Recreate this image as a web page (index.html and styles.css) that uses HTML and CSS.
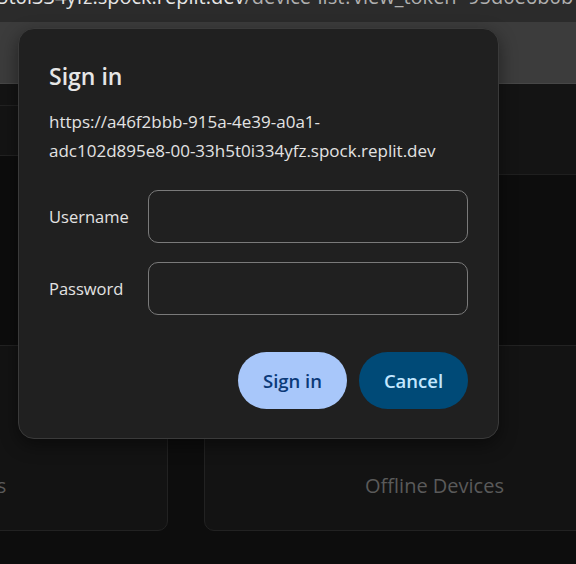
FILE: index.html
```html
<!DOCTYPE html>
<html lang="en">
<head>
<meta charset="utf-8">
<title>Sign in</title>
<link rel="stylesheet" href="styles.css">
</head>
<body>
  <div class="urlbar"><span class="url"><span class="host">5t0i334yfz.spock.replit.dev</span><span class="path">/device-list?view_token=95d0e6b0b-3</span></span></div>
  <div class="toolbar"></div>
  <div class="header">
    <div class="header-left"><div class="header-row"></div></div>
    <div class="header-right"></div>
  </div>
  <div class="cards">
    <div class="card"><span class="card-label">Online Devices</span></div>
    <div class="card"><span class="card-label">Offline Devices</span></div>
  </div>

  <div class="dialog" role="dialog" aria-labelledby="dlg-title">
    <h1 class="dialog-title" id="dlg-title">Sign in</h1>
    <p class="dialog-origin">https://a46f2bbb-915a-4e39-a0a1-<br>adc102d895e8-00-33h5t0i334yfz.spock.replit.dev</p>
    <form class="dialog-form">
      <label class="field-label" for="user">Username</label>
      <input class="field-input" id="user" type="text">
      <label class="field-label" for="pass">Password</label>
      <input class="field-input" id="pass" type="password">
    </form>
    <div class="dialog-actions">
      <button class="btn btn-primary" type="button">Sign in</button>
      <button class="btn btn-secondary" type="button">Cancel</button>
    </div>
  </div>
</body>
</html>
```
FILE: styles.css
```css
* { box-sizing: border-box; }

html, body {
  margin: 0;
  padding: 0;
}

body {
  width: 576px;
  height: 564px;
  overflow: hidden;
  background: #0d0d0d;
  font-family: "Open Sans", "Noto Sans", sans-serif;
  position: relative;
}

.urlbar {
  height: 22px;
  background: #2b2b2b;
  overflow: hidden;
  white-space: nowrap;
}

.url {
  display: block;
  font-size: 20px;
  line-height: 22px;
  margin-top: -14px;
  margin-left: -3px;
}

.host { color: #e6e6e6; }
.path { color: #b0b0b0; }

.toolbar {
  height: 62px;
  background: #3c3c3c;
  border-bottom: 1px solid #474747;
}

.header {
  display: flex;
  align-items: flex-start;
}

.header-left {
  width: 120px;
  height: 71px;
  background: #141414;
  padding-top: 21px;
}

.header-row {
  height: 51px;
  border-top: 1px solid #222;
  border-bottom: 1px solid #222;
}

.header-right {
  flex: 1;
  height: 91px;
  background: #141414;
  border-bottom: 1px solid #1f1f1f;
}

.cards {
  display: flex;
  gap: 36px;
  margin-top: 170px;
  margin-left: -293px;
}

.card {
  flex: 0 0 461px;
  height: 186px;
  background: #131313;
  border: 1px solid #222;
  border-radius: 10px;
  display: flex;
  align-items: flex-end;
  justify-content: center;
  padding-bottom: 30px;
}

.card-label {
  font-size: 20px;
  line-height: 28px;
  color: #5a5a5a;
}

/* Dialog overlay */
.dialog {
  position: absolute;
  left: 18px;
  top: 28px;
  width: 481px;
  height: 411px;
  background: #202020;
  border: 1px solid #3a3a3a;
  border-radius: 16px;
  box-shadow: 0 6px 18px rgba(0, 0, 0, 0.45);
  padding: 33px 30px 29px 30px;
  display: flex;
  flex-direction: column;
  color: #e3e3e3;
}

.dialog-title {
  margin: 0;
  font-size: 23px;
  line-height: 28px;
  font-weight: 600;
  color: #e6e6e6;
}

.dialog-origin {
  margin: 17px 0 0;
  font-size: 17px;
  line-height: 29px;
  color: #e3e3e3;
}

.dialog-form {
  margin-top: 25px;
  display: grid;
  grid-template-columns: 79px 1fr;
  column-gap: 20px;
  row-gap: 19px;
  align-items: center;
}

.field-label {
  font-size: 16.5px;
  color: #e3e3e3;
}

.field-input {
  height: 53px;
  width: 100%;
  background: transparent;
  border: 1.5px solid #7a7a7a;
  border-radius: 10px;
  color: #e3e3e3;
  font: inherit;
  padding: 0 12px;
}

.dialog-actions {
  margin-top: auto;
  display: flex;
  justify-content: flex-end;
  gap: 12px;
}

.btn {
  min-width: 109px;
  height: 57px;
  border: none;
  border-radius: 29px;
  font-family: inherit;
  font-size: 18.5px;
  font-weight: 600;
  padding: 0 20px;
}

.btn-primary {
  background: #a8c7fa;
  color: #0b3a78;
}

.btn-secondary {
  background: #004a77;
  color: #c2e7ff;
}
```
